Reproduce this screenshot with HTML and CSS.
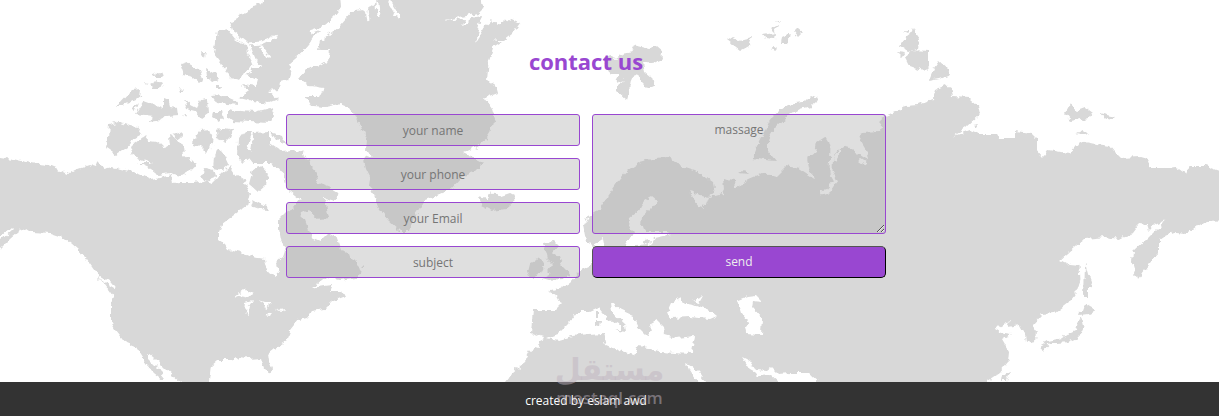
FILE: index.html
```
<!DOCTYPE html>
<html lang="en">
  <head>
    <meta charset="UTF-8" />
    <meta name="viewport" content="width=device-width, initial-scale=1.0" />
    <title>contact us</title>
    <link rel="stylesheet" href="styles.css">
  </head>
  <body>
    <section class="contact">
      <svg class="map" viewBox="0 0 1219 382" preserveAspectRatio="xMidYMid slice" aria-hidden="true">
        <!-- makes the coastlines uneven -->
        <filter id="coast" filterUnits="userSpaceOnUse" x="-10" y="-10" width="1239" height="402" color-interpolation-filters="sRGB">
          <feTurbulence type="fractalNoise" baseFrequency="0.16" numOctaves="2" seed="4" result="noise" />
          <feDisplacementMap in="SourceGraphic" in2="noise" scale="7" xChannelSelector="R" yChannelSelector="G" />
          <feGaussianBlur stdDeviation="0.5" />
        </filter>
        <g filter="url(#coast)">
        <!-- north america -->
        <path class="land" d="M-10 157L0 157 13 159 30 163 48 165 58 169 68 174 78 169 90 165 96 167 98 162 104 169 112 167 125 170 138 174 147 178 152 180 172 175 173 184 180 183 194 183 205 181 212 184 218 178 222 172 230 166 237 176 245 181 250 193 247 205 238 212 230 218 222 224 219 232 219 240 225 244 228 249 240 252 252 257 264 259 266 267 270 273 276 277 278 272 276 263 284 256 286 250 281 240 279 229 279 219 286 212 296 208 305 220 311 237 320 241 328 233 337 238 341 250 352 257 362 267 361 274 355 278 340 280 326 277 312 288 324 286 333 285 330 291 342 291 345 297 332 302 325 309 312 311 307 318 298 320 290 330 288 340 275 348 268 354 269 361 272 368 270 374 265 370 261 358 250 359 240 357 230 360 218 360 211 366 208 390H190L180 382 165 369 153 357 148 353 148 359 156 367 165 378 163 380 154 373 146 364 143 358 136 347 126 343 115 329 111 322 111 305 113 296 105 285 98 278 90 265 82 255 78 250 70 243 62 237 50 233 32 232 26 228 18 232 10 239 0 249 -10 252Z"/>
        <path class="land" d="M110 125L118 122 130 126 138 127 143 134 134 139 128 147 116 155 106 148 109 138ZM131 153L134 144 145 136 149 141 158 142 166 148 171 145 170 136 178 139 183 146 184 155 197 164 192 170 182 176 170 173 158 175 150 169 137 163 152 163 138 158ZM136 114L144 101 155 105 164 109 164 97 169 99 171 107 178 108 179 116 165 117 156 121 147 122 154 116ZM116 106L131 90 141 89 140 96 133 101 122 106ZM133 109L139 103 136 111ZM152 77L159 72 165 75 163 77ZM151 84L158 80 163 83 160 89 153 89ZM145 82L149 83 147 85ZM180 64L186 62 198 69 203 80 199 83 192 77 184 75ZM206 68L215 73 219 80 212 82 207 77ZM202 52L206 52 205 57ZM178 86L184 92 180 92ZM184 100L190 105 196 108 200 100 207 99 208 113 201 118 195 111 187 109ZM212 96L222 95 234 100 238 105 228 104 216 102ZM214 86L223 86 222 89 215 89ZM214 112L221 112 223 119 219 121 213 117ZM228 108L240 111 255 112 270 108 273 115 270 123 250 122 233 121 228 117ZM182 115L186 115 185 117ZM192 142L200 131 210 130 213 138 211 150 206 153 200 147 193 145ZM216 130L225 128 234 130 231 138 226 143 217 139ZM218 148L224 153 229 164 222 170 213 168 214 158ZM205 168L214 170 216 177 206 181 202 176ZM245 131L253 131 247 147 252 155 243 163 237 154 238 140ZM254 133L270 132 270 143 282 151 292 150 304 153 309 163 316 172 317 182 330 187 340 193 335 201 325 198 329 219 320 220 309 210 300 214 294 207 300 199 286 188 284 173 270 163 255 163 250 157 252 144ZM271 132L282 136 285 144 276 140ZM253 169L262 166 268 173 266 185 258 192 249 184ZM251 199L262 205 270 209 265 211 254 207ZM173 135L182 132 180 140Z"/>
        <path class="land" d="M218 31L227 29 235 39 246 46 249 56 255 64 245 71 240 80 230 78 223 65 214 53 216 42Z"/>
        <path class="land" d="M230 22L245 14 252 6 262 4 268 -8H340L341 8 334 17 324 26 315 35 308 45 302 52 288 64 291 70 288 80 280 82 279 90 268 91 278 99 268 103 252 101 239 98 248 91 242 85 256 87 258 80 247 75 253 68 262 68 256 61 248 55 248 47 236 38Z"/>
        <path class="water-line" d="M233 33L247 44 263 43 277 36M260 46L269 58M247 44L255 64"/>
        <path class="water-line" d="M310 32L327 26 343 13 350 3"/>

        <!-- greenland and iceland -->
        <path class="land" d="M352 11L366 10 376 3 385 -8H482L484 9 478 13 455 18 442 21 464 19 462 27 475 16 482 15 475 42 485 26 492 20 497 26 508 18 520 23 513 33 504 40 492 40 503 42 493 48 489 60 487 80 496 86 498 93 485 98 492 108 495 118 492 130 487 138 475 148 464 153 470 156 484 163 475 172 462 177 450 190 438 195 425 200 415 215 409 231 400 231 388 220 378 206 374 195 370 187 371 178 366 168 364 160 372 155 365 150 366 140 362 130 357 118 350 108 340 104 325 107 312 106 306 96 320 96 324 88 310 86 299 78 307 69 320 65 328 60 330 50 318 50 320 41 332 32 340 25Z"/>
        <path class="water-line" d="M366 6L369 20M377 3L378 17M388 0L399 18"/>
        <path class="land" d="M478 197L488 199 492 193 499 197 511 193 515 201 505 209 492 211 482 206Z"/>
        <path class="land" d="M543 243L554 242 558 246 553 252 559 256 562 265 568 271 571 275 562 279 548 280 541 278 551 273 548 270 552 264 547 259ZM530 263L541 258 545 265 541 273 530 277 528 271Z"/>

        <!-- europe, asia and africa -->
        <path class="land" d="M500 390L505 382 512 373 525 362 530 352 540 345 544 337 531 333 533 310 555 310 561 304 557 296 548 291 560 288 569 283 580 271 589 267 594 258 592 247 586 241 583 225 588 216 600 208 611 192 620 179 628 170 640 162 655 158 668 157 679 165 695 170 713 182 715 192 708 197 690 192 698 204 707 205 710 197 722 194 724 190 723 178 734 180 735 188 750 178 762 173 776 177 787 166 800 169 814 178 809 168 807 158 815 152 817 142 825 137 831 147 833 160 835 152 847 144 852 150 868 160 866 149 858 136 862 133 880 132 882 118 895 112 905 106 918 105 933 99 936 89 945 85 951 88 953 97 970 98 978 105 980 114 965 128 953 136 970 130 980 134 998 134 999 138 1014 138 1014 131 1032 133 1037 138 1037 150 1043 157 1048 150 1060 152 1070 153 1080 141 1095 144 1110 146 1114 151 1121 158 1140 157 1147 159 1150 168 1165 168 1176 167 1186 174 1190 166 1205 166 1219 171H1229V220L1207 221 1196 227 1188 233 1175 232 1167 235 1160 240 1160 252 1148 265 1137 279 1132 262 1133 252 1148 238 1160 226 1165 219 1155 224 1149 231 1147 225 1138 224 1129 236 1118 239 1105 237 1085 239 1075 247 1060 260 1070 265 1080 266 1082 275 1078 289 1068 303 1055 313 1042 314 1032 325 1037 332 1036 341 1026 343 1025 334 1020 325 1008 327 1010 321 995 329 1000 332 1012 334 1002 340 1009 352 1008 362 1000 372 988 380 980 390Z"/>
        <path class="land" d="M603 60L609 55 616 58 622 54 634 52 632 48 638 45 650 48 656 46 663 52 660 60 652 64 643 62 645 72 652 78 654 86 648 89 642 83 638 74 632 76 630 86 626 99 617 91 617 85 624 80 615 83 620 74 610 74ZM727 41L733 37 740 40 752 37 749 46 740 51ZM763 35L775 33 774 39 765 38ZM770 29L779 24 773 32ZM782 37L790 33 788 45 781 45ZM794 32L798 28 803 32 798 37ZM769 49L778 46 776 51ZM775 20L780 20 778 22ZM753 158L757 147 764 133 769 122 775 114 788 105 803 103 811 95 818 98 814 105 800 109 788 116 776 127 768 141 768 151 776 161 764 160ZM739 173L744 170 748 174ZM903 39L911 33 913 29 920 39 918 49 908 51 900 46ZM897 52L905 53 902 57ZM904 31L910 31 908 33ZM906 58L912 50 929 51 929 66 924 71 910 66ZM929 81L934 68 939 61 948 69 950 75 940 79ZM1065 114L1070 105 1077 110 1085 107 1093 113 1090 118 1080 119 1071 121ZM1100 113L1116 117 1112 120 1104 118ZM1077 133L1083 130 1089 136ZM973 125L979 124 977 127ZM1085 263L1088 274 1092 285 1088 288 1088 298 1084 298ZM1084 303L1090 307 1096 310 1088 314 1080 315ZM1082 317L1084 326 1079 337 1068 342 1058 343 1050 343 1042 352 1039 346 1048 341 1062 338 1068 334 1076 330 1078 320ZM1004 375L1009 373 1006 381 1003 381Z"/>

        <!-- inland seas -->
        <path class="water" d="M547 338L558 334 568 324 577 312 590 312 599 308 607 318 621 325 621 330 613 330 626 332 625 324 612 312 611 302 620 309 633 315 639 328 648 337 652 330 650 324 657 320 664 327 665 335 676 338 695 336 692 351 688 354 660 352 649 348 637 347 634 355 620 351 606 345 603 333 590 334 572 336 558 340ZM667 314L672 303 680 298 686 304 696 306 712 312 717 316 710 319 690 317 672 318ZM692 301L704 296 700 303ZM738 300L748 296 756 295 763 302 753 301 752 307 762 318 761 334 746 333 745 327 749 321 742 313ZM687 364L694 368 700 374 710 390H702L689 370ZM742 357L750 361 756 370 766 371 771 367 778 374 790 373 808 373 824 388H786L771 375 760 376 751 371Z"/>
        <path class="water" d="M645 201L652 197 657 201 651 209 642 217 641 225 646 232 667 232 672 234 654 238 650 245 636 246 632 252 622 250 629 240 633 232 628 227 629 218 638 211ZM594 244L603 238 605 248 599 252ZM693 201L700 201 704 208 698 207Z"/>
        <path class="land" d="M596 312L599 312 599 318 596 318ZM596 320L600 320 599 327 596 326ZM642 240L650 239 649 245 643 243Z"/>
        <path class="water" d="M234 297L244 289 254 294 249 297 239 295ZM246 302L253 300 249 306 248 315 245 313ZM258 301L264 303 272 303 265 308 263 304ZM264 316L272 313 270 317ZM276 310L287 309 280 312Z"/>
        <path class="water-line" d="M832 146L831 172 836 181 828 191 822 193M834 160L840 150M860 160L866 164M1081 266L1082 280 1078 292M0 239L12 228M81 254L98 278M100 278L117 288"/>
        </g>
      </svg>

      <h1 class="title">contact us</h1>
      <form class="contact-form">
        <div class="column">
          <input class="field" type="text" placeholder="your name" aria-label="your name">
          <input class="field" type="tel" placeholder="your phone" aria-label="your phone">
          <input class="field" type="email" placeholder="your Email" aria-label="your Email">
          <input class="field" type="text" placeholder="subject" aria-label="subject">
        </div>
        <div class="column">
          <textarea class="field message" placeholder="massage" aria-label="massage"></textarea>
          <button class="send" type="submit">send</button>
        </div>
      </form>
    </section>

    <footer class="footer">
      <p>created by eslam awd</p>
      <div class="watermark">
        <span class="watermark-name" lang="ar">مستقل</span>
        <span class="watermark-site">mostaql.com</span>
      </div>
    </footer>
  </body>
</html>
```
FILE: styles.css
```
* {
  margin: 0;
  padding: 0;
  box-sizing: border-box;
}

body {
  font-family: "Open Sans", "Noto Sans", sans-serif;
  font-size: 12px;
  background-color: #fff;
}

.contact {
  position: relative;
  padding: 40px 47px 104px 0;
}

.map {
  position: absolute;
  top: 0;
  left: 0;
  width: 100%;
  height: 100%;
  z-index: -1;
}

.land {
  fill: #d8d8d8;
}

.water {
  fill: #fff;
}

.water-line {
  fill: none;
  stroke: #fff;
  stroke-width: 3;
  stroke-linejoin: round;
}

.title {
  margin-bottom: 32px;
  color: #9947d1;
  font-size: 22px;
  line-height: 42px;
  text-align: center;
}

.contact-form {
  display: flex;
  gap: 12px;
  max-width: 600px;
  margin: 0 auto;
}

.column {
  display: flex;
  flex: 1;
  flex-direction: column;
  gap: 12px;
}

.field,
.send {
  width: 100%;
  height: 32px;
  font-family: inherit;
  font-size: 12px;
  line-height: 18px;
  text-align: center;
}

.field {
  padding: 6px;
  border: 1px solid #9947d1;
  border-radius: 3px;
  background-color: rgba(176, 176, 176, 0.4);
  outline: none;
}

.field::placeholder {
  color: #757575;
}

.message {
  height: 120px;
  resize: vertical;
}

.send {
  border: 1px outset #000;
  border-radius: 5px;
  background-color: #9947d1;
  color: #eee;
  cursor: pointer;
}

.footer {
  position: relative;
  padding: 10px 47px 6px 0;
  background-color: #333;
  color: #fff;
  line-height: 18px;
  text-align: center;
}

/* sits over the edge between the map and the footer */
.watermark {
  position: absolute;
  bottom: 6px;
  left: 50%;
  display: flex;
  flex-direction: column;
  align-items: center;
  transform: translateX(-50%);
  color: rgba(190, 178, 190, 0.5);
  pointer-events: none;
}

.watermark-name {
  font-family: "DejaVu Sans", sans-serif;
  font-size: 30px;
  font-weight: bold;
  line-height: 32px;
}

.watermark-site {
  font-size: 17px;
  font-weight: 600;
  line-height: 24px;
}
```
